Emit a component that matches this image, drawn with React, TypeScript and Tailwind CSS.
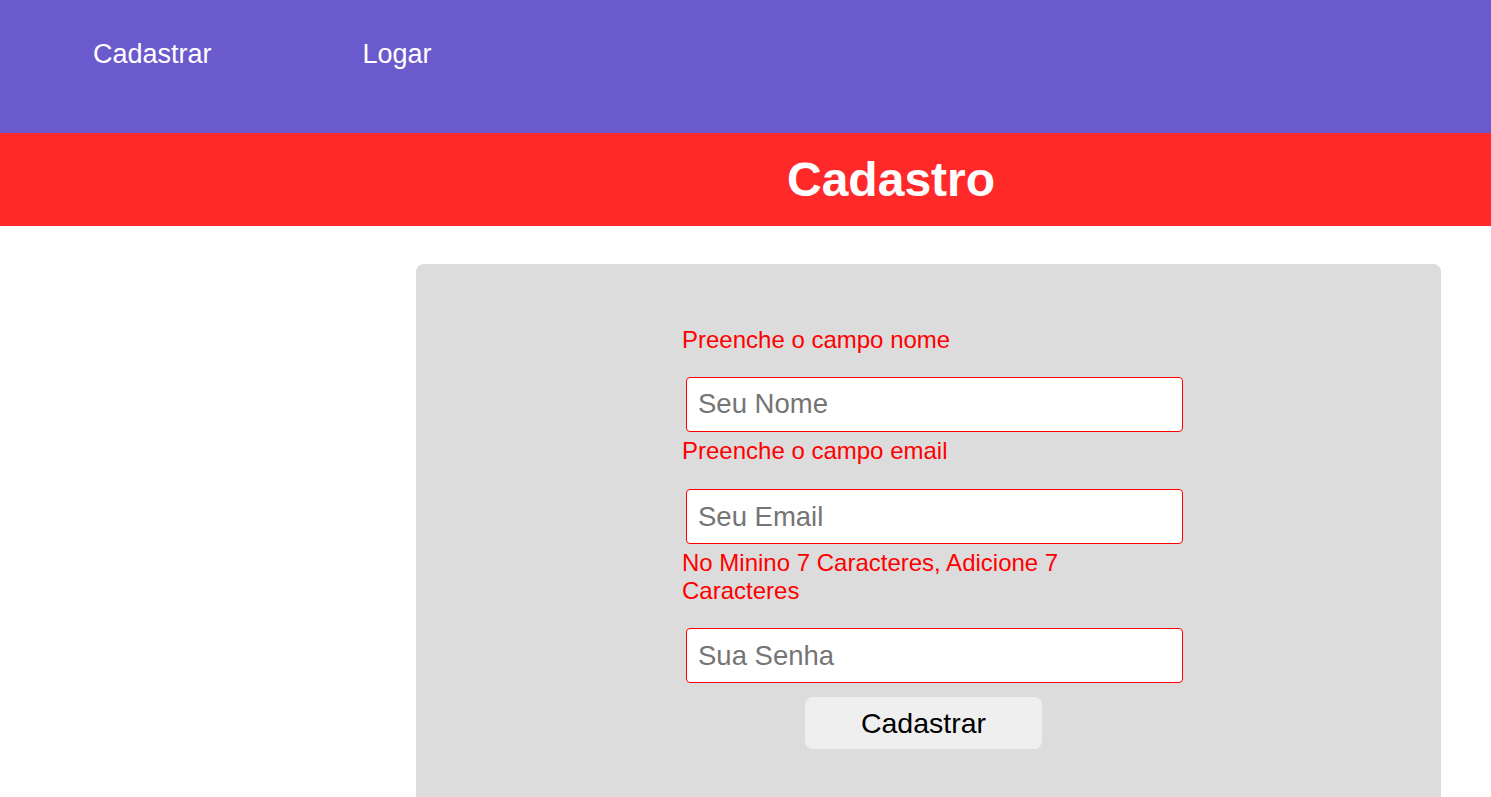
import React from "react";

export default function App() {
  const font = { fontFamily: '"Liberation Sans", Arial, sans-serif' };
  return (
    <div className="min-h-screen bg-white" style={font}>
      <nav className="h-[133px] bg-[#6a5acd]">
        <ul className="flex items-start pl-[93px] pt-[39px] gap-[151px] text-[27px] leading-[31px] text-white">
          <li>Cadastrar</li>
          <li>Logar</li>
        </ul>
      </nav>
      <div className="h-[93px] bg-[#ff2929] flex items-center pl-[787px]">
        <h1 className="text-[48px] font-bold text-white leading-[55px]">Cadastro</h1>
      </div>
      <div className="pt-[38px] pl-[416px] pr-[50px]">
        <div className="bg-[#dcdcdc] rounded-t-lg pt-[62px] pb-[80px] pl-[266px]">
          <form className="flex flex-col items-start w-[505px]">
            <p className="text-[24px] leading-[27.6px] text-[#ff0000] w-[420px]">Preenche o campo nome</p>
            <input
              placeholder="Seu Nome"
              className="mt-[23px] ml-[4px] w-[497px] h-[55px] bg-white border border-[#ff0000] rounded-[4px] px-[11px] text-[27.5px] placeholder:text-[#757575] outline-none"
            />
            <p className="mt-[5px] text-[24px] leading-[27.6px] text-[#ff0000] w-[420px]">Preenche o campo email</p>
            <input
              placeholder="Seu Email"
              className="mt-[25px] ml-[4px] w-[497px] h-[55px] bg-white border border-[#ff0000] rounded-[4px] px-[11px] text-[27.5px] placeholder:text-[#757575] outline-none"
            />
            <p className="mt-[5px] text-[24px] leading-[27.6px] text-[#ff0000] w-[420px]">No Minino 7 Caracteres, Adicione 7 Caracteres</p>
            <input
              type="password"
              placeholder="Sua Senha"
              className="mt-[24px] ml-[4px] w-[497px] h-[55px] bg-white border border-[#ff0000] rounded-[4px] px-[11px] text-[27.5px] placeholder:text-[#757575] outline-none"
            />
            <button
              type="button"
              className="mt-[14px] ml-[123px] w-[237px] h-[52px] bg-[#efefef] rounded-[8px] text-[28.5px] text-black"
            >
              Cadastrar
            </button>
          </form>
        </div>
      </div>
    </div>
  );
}
